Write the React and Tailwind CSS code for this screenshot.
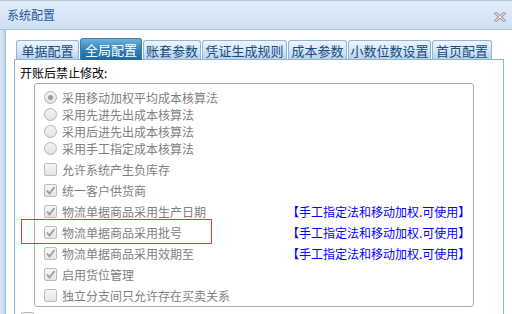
import React from "react";

const FONT = { fontFamily: '"Noto Sans CJK SC", "Noto Sans", sans-serif' };

function Radio({ checked }) {
  return (
    <span className="relative inline-flex h-[13px] w-[13px] shrink-0 items-center justify-center rounded-full border border-[#b4b4b4] bg-gradient-to-b from-[#f4f4f4] to-[#e2e2e2]">
      {checked && <span className="h-[5px] w-[5px] rounded-full bg-[#9a9a9a]" />}
    </span>
  );
}

function Check({ checked }) {
  return (
    <span className="relative inline-flex h-[13px] w-[13px] shrink-0 items-center justify-center rounded-[2px] border border-[#bcbcbc] bg-gradient-to-b from-[#f6f6f6] to-[#e4e4e4]">
      {checked && (
        <svg width="11" height="11" viewBox="0 0 11 11">
          <path d="M2 5.5 L4.5 8.5 L9.5 2" fill="none" stroke="#9c9c9c" strokeWidth="1.8" />
        </svg>
      )}
    </span>
  );
}

const radios = [
  ["采用移动加权平均成本核算法", true],
  ["采用先进先出成本核算法", false],
  ["采用后进先出成本核算法", false],
  ["采用手工指定成本核算法", false],
];

const checks = [
  ["允许系统产生负库存", false, false, false],
  ["统一客户供货商", true, false, false],
  ["物流单据商品采用生产日期", true, true, false],
  ["物流单据商品采用批号", true, true, true],
  ["物流单据商品采用效期至", true, true, false],
  ["启用货位管理", true, false, false],
  ["独立分支间只允许存在买卖关系", false, false, false],
];

const tabs = [
  ["单据配置", 63, false],
  ["全局配置", 62, true],
  ["账套参数", 58, false],
  ["凭证生成规则", 85, false],
  ["成本参数", 59, false],
  ["小数位数设置", 83, false],
  ["首页配置", 60, false],
];

export default function App() {
  return (
    <div className="relative h-[314px] w-[512px] overflow-hidden bg-white" style={FONT}>
      {/* title bar */}
      <div className="flex h-[30px] items-center justify-between border-b border-[#a9c4e2] border-t border-t-[#b7c8da] bg-gradient-to-b from-[#e2edf9] to-[#cde0f4] pl-[7px] pr-[6px]">
        <span className="text-[12px] leading-none text-[#24589a]">系统配置</span>
        <svg width="12" height="10" viewBox="0 0 12 10" className="mt-[3px]">
          <path d="M2 1.5 L10 8.5 M10 1.5 L2 8.5" stroke="#a4a4a4" strokeWidth="3" strokeLinecap="square" />
          <path d="M2 1.5 L10 8.5 M10 1.5 L2 8.5" stroke="#f2f2f2" strokeWidth="1" strokeLinecap="square" />
        </svg>
      </div>

      <div className="flex h-[284px]">
        <div className="w-[6px] shrink-0 border-r border-[#9dbbe0] bg-gradient-to-r from-[#dbe7f5] to-[#c3d7ee]" />
        <div className="flex min-w-0 flex-1 flex-col pl-[8px] pt-[8px]">
          {/* tabs */}
          <div className="flex h-[21px] items-end gap-[1px] pl-[2px]">
            {tabs.map(([t, w, active]) =>
              active ? (
                <div
                  key={t}
                  className="relative z-10 -mb-px flex h-[22px] items-center justify-center rounded-t-[3px] border border-b-0 border-[#3a7db2] bg-gradient-to-b from-[#6db1dc] via-[#2f82bd] to-[#1b69a3] text-[13px] leading-none text-white"
                  style={{ width: w }}
                >
                  {t}
                </div>
              ) : (
                <div
                  key={t}
                  className="flex h-[19px] items-center justify-center rounded-t-[3px] border border-b-0 border-[#8fb6d6] bg-gradient-to-b from-[#eef5fc] via-[#d6e7f6] to-[#b7d3eb] pt-[1px] text-[13px] leading-none text-[#164b7c]"
                  style={{ width: w }}
                >
                  {t}
                </div>
              )
            )}
          </div>

          {/* panel */}
          <div className="h-[300px] w-[490px] border border-[#8db5cf] pl-[5px] pt-[5px]">
            <div className="text-[12px] leading-[16px] text-black">开账后禁止修改:</div>
            <div className="ml-[14px] mt-[2px] w-[440px] rounded-[3px] border border-[#a6adb6] pl-[9px] pt-[5px]">
              {radios.map(([t, c]) => (
                <div key={t} className="flex h-[17px] items-center gap-[5px]">
                  <Radio checked={c} />
                  <span className="text-[12px] leading-none text-[#808080]">{t}</span>
                </div>
              ))}
              <div className="mt-[2px]">
                {checks.map(([t, c, blue, red]) => (
                  <div key={t} className="relative flex h-[21px] items-center">
                    <div className="flex w-[243px] items-center gap-[5px]">
                      <Check checked={c} />
                      <span className="text-[12px] leading-none text-[#808080]">{t}</span>
                    </div>
                    {blue && (
                      <span className="text-[12px] leading-none text-[#0000ff]">【手工指定法和移动加权.可使用】</span>
                    )}
                    {red && (
                      <div className="absolute left-[-23px] top-[-3px] h-[25px] w-[191px] border border-[#e03a3a]" />
                    )}
                  </div>
                ))}
              </div>
            </div>
            <div className="ml-[1px] mt-[5px] h-[13px] w-[13px] rounded-[2px] border border-[#bcbcbc] bg-[#eeeeee]" />
          </div>
        </div>
      </div>
    </div>
  );
}
